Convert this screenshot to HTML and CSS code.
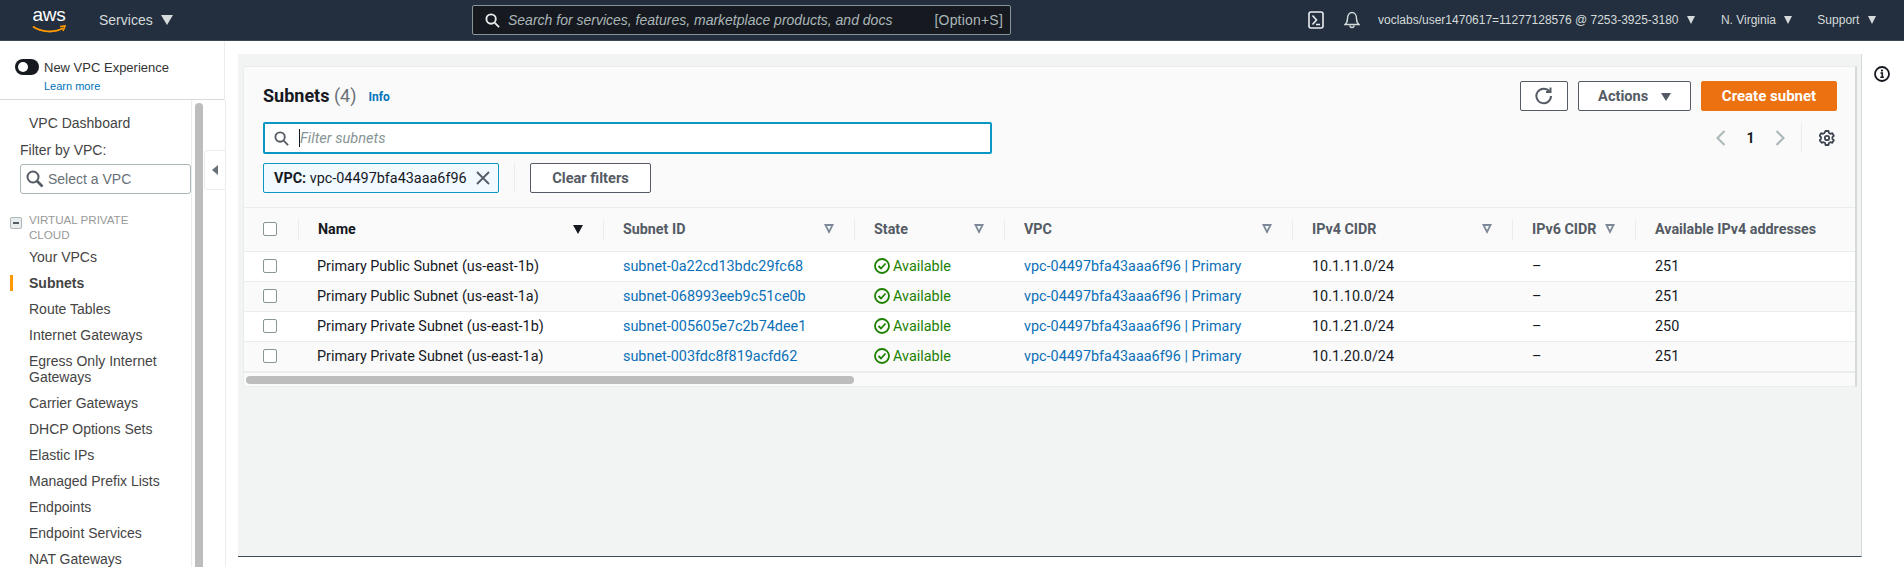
FILE: index.html
```html
<!DOCTYPE html>
<html lang="en">

<head>
    <meta charset="UTF-8">
    <meta name="viewport" content="width=device-width, initial-scale=1.0">
    <title>Subnets | VPC Console</title>
    <link rel="stylesheet" href="styles.css">
</head>

<body>
    <header class="topbar">
        <a class="logo" href="#">
            <span class="logo-text">aws</span>
            <svg class="logo-smile" viewBox="0 0 34 9"><path d="M1 1.5C9 7.5 23 8 31 3" fill="none" stroke="#f90" stroke-width="2"/><path d="M28 1.5l5-.5-2 5" fill="none" stroke="#f90" stroke-width="1.6"/></svg>
        </a>
        <a class="top-link services" href="#">Services <span class="caret caret-big"></span></a>
        <div class="search">
            <svg class="search-icon" viewBox="0 0 16 16"><circle cx="6.5" cy="6.5" r="5" fill="none" stroke="#eaeded" stroke-width="2"/><path d="M10.5 10.5l4.5 4.5" stroke="#eaeded" stroke-width="2"/></svg>
            <span class="search-text">Search for services, features, marketplace products, and docs</span>
            <span class="search-key">[Option+S]</span>
        </div>
        <div class="top-right">
            <svg class="top-icon shell" viewBox="0 0 16 18"><rect x="1" y="1" width="14" height="16" rx="2" fill="none" stroke="#eaeded" stroke-width="1.6"/><path d="M4.5 4.5L8.5 9l-4 4.5M8 13.5h4" fill="none" stroke="#eaeded" stroke-width="1.6"/></svg>
            <svg class="top-icon bell" viewBox="0 0 16 18"><path d="M1 13.5c2-1.5 2.5-3 2.5-6C3.500 4 5.500 1.500 8 1.500s4.500 2.500 4.500 6c0 3 .5 4.500 2.500 6z" fill="none" stroke="#d5dbdb" stroke-width="1.400"/><path d="M6 14.500a2 2 0 0 0 4 0" fill="none" stroke="#d5dbdb" stroke-width="1.400"/></svg>
            <a class="top-link account" href="#">voclabs/user1470617=11277128576 @ 7253-3925-3180 <span class="caret"></span></a>
            <a class="top-link region" href="#">N. Virginia <span class="caret"></span></a>
            <a class="top-link support" href="#">Support <span class="caret"></span></a>
        </div>
    </header>

    <div class="page">
        <aside class="sidenav">
            <div class="experience">
                <div class="experience-row">
                    <span class="toggle"></span>
                    <span>New VPC Experience</span>
                </div>
                <a class="learn-more" href="#">Learn more</a>
            </div>
            <div class="nav-scroll">
                <nav class="nav-list">
                    <a class="nav-dashboard" href="#">VPC Dashboard</a>
                    <div class="nav-filter-label">Filter by VPC:</div>
                    <div class="vpc-select">
                        <svg viewBox="0 0 18 18"><circle cx="7" cy="7" r="5.500" fill="none" stroke="#545b64" stroke-width="2"/><path d="M11 11l5.500 5.500" stroke="#545b64" stroke-width="2.600"/></svg>
                        <span>Select a VPC</span>
                    </div>
                    <div class="nav-section">
                        <span class="collapse-box"></span>
                        <span>VIRTUAL PRIVATE CLOUD</span>
                    </div>
                    <a class="nav-item" href="#">Your VPCs</a>
                    <a class="nav-item active" href="#">Subnets</a>
                    <a class="nav-item" href="#">Route Tables</a>
                    <a class="nav-item" href="#">Internet Gateways</a>
                    <a class="nav-item" href="#">Egress Only Internet Gateways</a>
                    <a class="nav-item" href="#">Carrier Gateways</a>
                    <a class="nav-item" href="#">DHCP Options Sets</a>
                    <a class="nav-item" href="#">Elastic IPs</a>
                    <a class="nav-item" href="#">Managed Prefix Lists</a>
                    <a class="nav-item" href="#">Endpoints</a>
                    <a class="nav-item" href="#">Endpoint Services</a>
                    <a class="nav-item" href="#">NAT Gateways</a>
                </nav>
                <div class="nav-thumb"></div>
            </div>
            <div class="collapse-handle"><span class="arrow-left"></span></div>
        </aside>

        <div class="main-wrap">
            <main class="main">
                <section class="card">
                    <div class="card-head">
                        <div class="head-left">
                            <div class="title-row">
                                <h1>Subnets <span class="count">(4)</span></h1>
                                <a class="info" href="#">Info</a>
                            </div>
                            <div class="filter-input">
                                <svg viewBox="0 0 16 16"><circle cx="6.500" cy="6.500" r="5" fill="none" stroke="#545b64" stroke-width="2"/><path d="M10.500 10.500l4.500 4.500" stroke="#545b64" stroke-width="2"/></svg>
                                <span class="cursor"></span>
                                <span class="filter-placeholder">Filter subnets</span>
                            </div>
                            <div class="token-row">
                                <div class="token">
                                    <span><b>VPC:</b> vpc-04497bfa43aaa6f96</span>
                                    <svg viewBox="0 0 14 14"><path d="M1 1l12 12M13 1L1 13" stroke="#545b64" stroke-width="1.800"/></svg>
                                </div>
                                <span class="token-sep"></span>
                                <button class="btn clear-btn">Clear filters</button>
                            </div>
                        </div>
                        <div class="head-right">
                            <div class="actions">
                                <button class="btn refresh-btn">
                                    <svg viewBox="0 0 18 18"><path d="M14.500 4.500A7.300 7.300 0 1 0 16 9" fill="none" stroke="#545b64" stroke-width="2"/><path d="M11 5h4.500V.5" fill="none" stroke="#545b64" stroke-width="2"/></svg>
                                </button>
                                <button class="btn actions-btn">Actions <span class="caret caret-btn"></span></button>
                                <button class="btn primary-btn">Create subnet</button>
                            </div>
                            <div class="pager">
                                <svg class="pager-arrow" viewBox="0 0 10 16"><path d="M8.500 1L1.500 8l7 7" fill="none" stroke="#aab7b8" stroke-width="2"/></svg>
                                <span class="pager-num">1</span>
                                <svg class="pager-arrow" viewBox="0 0 10 16"><path d="M1.500 1l7 7-7 7" fill="none" stroke="#aab7b8" stroke-width="2"/></svg>
                                <span class="pager-sep"></span>
                                <svg class="gear" viewBox="0 0 16 16"><path d="M6.500 1h3l.4 1.900 1.500.9 1.900-.6 1.500 2.600-1.400 1.300v1.800l1.400 1.300-1.500 2.600-1.900-.6-1.500.9-.4 1.900h-3l-.4-1.900-1.500-.9-1.900.6L.6 10.200 2 8.900V7.100L.6 5.800l1.500-2.600 1.900.6 1.500-.9z" fill="none" stroke="#3f4650" stroke-width="1.800" stroke-linejoin="round"/><circle cx="8" cy="8" r="2.200" fill="none" stroke="#3f4650" stroke-width="1.800"/></svg>
                            </div>
                        </div>
                    </div>

                    <div class="table-wrap">
                        <table class="subnets">
                            <colgroup>
                                <col class="col-check">
                                <col class="col-name">
                                <col class="col-id">
                                <col class="col-state">
                                <col class="col-vpc">
                                <col class="col-ipv4">
                                <col class="col-ipv6">
                                <col class="col-avail">
                            </colgroup>
                            <thead>
                                <tr>
                                    <th><span class="check"></span></th>
                                    <th class="sorted"><div class="th-in">Name<span class="sort-down"></span></div></th>
                                    <th><div class="th-in">Subnet ID<span class="sort"></span></div></th>
                                    <th><div class="th-in">State<span class="sort"></span></div></th>
                                    <th><div class="th-in">VPC<span class="sort"></span></div></th>
                                    <th><div class="th-in">IPv4 CIDR<span class="sort"></span></div></th>
                                    <th><div class="th-in short">IPv6 CIDR<span class="sort"></span></div></th>
                                    <th><div class="th-in">Available IPv4 addresses<span class="sort"></span></div></th>
                                </tr>
                            </thead>
                            <tbody>
                                <tr>
                                    <td><span class="check"></span></td>
                                    <td>Primary Public Subnet (us-east-1b)</td>
                                    <td><a href="#">subnet-0a22cd13bdc29fc68</a></td>
                                    <td><span class="status"><svg viewBox="0 0 16 16"><circle cx="8" cy="8" r="7" fill="none" stroke="#1d8102" stroke-width="1.800"/><path d="M4.500 8l2.500 2.500 4.500-5" fill="none" stroke="#1d8102" stroke-width="1.800"/></svg>Available</span></td>
                                    <td><a href="#">vpc-04497bfa43aaa6f96 | Primary</a></td>
                                    <td>10.1.11.0/24</td>
                                    <td>–</td>
                                    <td>251</td>
                                </tr>
                                <tr>
                                    <td><span class="check"></span></td>
                                    <td>Primary Public Subnet (us-east-1a)</td>
                                    <td><a href="#">subnet-068993eeb9c51ce0b</a></td>
                                    <td><span class="status"><svg viewBox="0 0 16 16"><circle cx="8" cy="8" r="7" fill="none" stroke="#1d8102" stroke-width="1.800"/><path d="M4.500 8l2.500 2.500 4.500-5" fill="none" stroke="#1d8102" stroke-width="1.800"/></svg>Available</span></td>
                                    <td><a href="#">vpc-04497bfa43aaa6f96 | Primary</a></td>
                                    <td>10.1.10.0/24</td>
                                    <td>–</td>
                                    <td>251</td>
                                </tr>
                                <tr>
                                    <td><span class="check"></span></td>
                                    <td>Primary Private Subnet (us-east-1b)</td>
                                    <td><a href="#">subnet-005605e7c2b74dee1</a></td>
                                    <td><span class="status"><svg viewBox="0 0 16 16"><circle cx="8" cy="8" r="7" fill="none" stroke="#1d8102" stroke-width="1.800"/><path d="M4.500 8l2.500 2.500 4.500-5" fill="none" stroke="#1d8102" stroke-width="1.800"/></svg>Available</span></td>
                                    <td><a href="#">vpc-04497bfa43aaa6f96 | Primary</a></td>
                                    <td>10.1.21.0/24</td>
                                    <td>–</td>
                                    <td>250</td>
                                </tr>
                                <tr>
                                    <td><span class="check"></span></td>
                                    <td>Primary Private Subnet (us-east-1a)</td>
                                    <td><a href="#">subnet-003fdc8f819acfd62</a></td>
                                    <td><span class="status"><svg viewBox="0 0 16 16"><circle cx="8" cy="8" r="7" fill="none" stroke="#1d8102" stroke-width="1.800"/><path d="M4.500 8l2.500 2.500 4.500-5" fill="none" stroke="#1d8102" stroke-width="1.800"/></svg>Available</span></td>
                                    <td><a href="#">vpc-04497bfa43aaa6f96 | Primary</a></td>
                                    <td>10.1.20.0/24</td>
                                    <td>–</td>
                                    <td>251</td>
                                </tr>
                            </tbody>
                        </table>
                    </div>
                    <div class="h-scroll"><div class="h-thumb"></div></div>
                </section>
            </main>
        </div>

        <aside class="help-rail">
            <svg viewBox="0 0 16 16"><circle cx="8" cy="8" r="7" fill="none" stroke="#16191f" stroke-width="1.800"/><path d="M6.500 7H8.300v4M6.300 11.200h3.600" fill="none" stroke="#16191f" stroke-width="1.600"/><circle cx="8" cy="4.600" r="1.100" fill="#16191f"/></svg>
        </aside>
    </div>
</body>

</html>
```

FILE: styles.css
```css
/* Page frame */
* {
    box-sizing: border-box;
}

html,
body {
    margin: 0;
    height: 567px;
    overflow: hidden;
    background-color: #fff;
}

body {
    font-family: "Liberation Sans", Arial, sans-serif;
    color: #16191f;
}

a {
    text-decoration: none;
    color: inherit;
}

svg {
    display: block;
    flex: none;
}

/* Top navigation */
.topbar {
    display: flex;
    align-items: center;
    height: 41px;
    background-color: #232f3e;
    border-bottom: 1px solid #3b4654;
    color: #d5dbdb;
}

.logo {
    position: relative;
    width: 34px;
    height: 30px;
    margin-left: 32px;
    margin-right: 33px;
    flex: none;
}

.logo-text {
    display: block;
    font-size: 19px;
    line-height: 20px;
    color: #fff;
    text-align: center;
    letter-spacing: -0.3px;
}

.logo-smile {
    position: absolute;
    left: 0;
    top: 20px;
    width: 34px;
    height: 9px;
}

.top-link {
    white-space: nowrap;
    font-size: 12px;
    color: #d5dbdb;
}

.services {
    font-size: 14px;
    width: 373px;
    flex: none;
}

.caret {
    display: inline-block;
    width: 0;
    height: 0;
    margin-left: 5px;
    border-left: 4.500px solid transparent;
    border-right: 4.500px solid transparent;
    border-top: 8px solid #d5dbdb;
}

.caret-big {
    border-left-width: 6px;
    border-right-width: 6px;
    border-top-width: 10px;
    margin-left: 4px;
    vertical-align: 0;
}

.search {
    display: flex;
    align-items: center;
    width: 539px;
    height: 30px;
    padding: 0 7px 0 12px;
    flex: none;
    background-color: #16191f;
    border: 1px solid #879596;
    border-radius: 2px;
}

.search-icon {
    width: 15px;
    height: 15px;
    margin-right: 8px;
}

.search-text {
    font-size: 14px;
    font-style: italic;
    color: #aab7b8;
    white-space: nowrap;
}

.search-key {
    margin-left: auto;
    font-size: 14px;
    letter-spacing: 0.2px;
    color: #aab7b8;
}

.top-right {
    display: flex;
    align-items: center;
    margin-left: 297px;
}

.top-icon {
    width: 16px;
    height: 18px;
}

.bell {
    margin-left: 20px;
    margin-right: 18px;
}

.region {
    margin-left: 26px;
}

.support {
    margin-left: 25px;
}

/* Left navigation */
.page {
    display: flex;
    height: 526px;
}

.sidenav {
    position: relative;
    width: 238px;
    flex: none;
    font-size: 14px;
    color: #444;
}

.experience {
    width: 225px;
    height: 59px;
    padding: 18px 0 0 15px;
    border-right: 1px solid #eaeded;
    border-bottom: 1px solid #d5dbdb;
}

.experience-row {
    display: flex;
    align-items: center;
    gap: 5px;
    height: 16px;
    font-size: 13px;
    color: #333;
}

.toggle {
    position: relative;
    width: 24px;
    height: 16px;
    border-radius: 8px;
    background-color: #16191f;
    flex: none;
}

.toggle::after {
    content: "";
    position: absolute;
    left: 3px;
    top: 3px;
    width: 10px;
    height: 10px;
    border-radius: 50%;
    background-color: #fff;
}

.learn-more {
    display: block;
    margin: 5px 0 0 29px;
    font-size: 11px;
    color: #0073bb;
}

.nav-scroll {
    display: flex;
    width: 226px;
    height: 467px;
    overflow: hidden;
    border-right: 1px solid #eaeded;
}

.nav-list {
    width: 192px;
    height: 500px;
    flex: none;
    padding-top: 14px;
    border-right: 1px solid #eaeded;
}

.nav-dashboard {
    display: block;
    padding-left: 29px;
    line-height: 18px;
}

.nav-filter-label {
    padding-left: 20px;
    margin-top: 9px;
    line-height: 18px;
}

.vpc-select {
    display: flex;
    align-items: center;
    gap: 4px;
    width: 171px;
    height: 30px;
    margin: 5px 0 0 20px;
    padding-left: 5px;
    background-color: #fff;
    border: 1px solid #aab7b8;
    border-radius: 3px;
    color: #687078;
}

.vpc-select svg {
    width: 18px;
    height: 18px;
}

.nav-section {
    position: relative;
    margin-top: 18px;
    padding-left: 29px;
    padding-right: 30px;
    font-size: 11.600px;
    line-height: 15px;
    color: #999;
}

.collapse-box {
    position: absolute;
    left: 10px;
    top: 5px;
    width: 12px;
    height: 12px;
    background-color: #eaeded;
    border: 1px solid #aab7b8;
    border-radius: 2px;
}

.collapse-box::after {
    content: "";
    position: absolute;
    left: 2px;
    top: 4px;
    width: 6px;
    height: 2px;
    background-color: #545b64;
}

.nav-item {
    position: relative;
    display: block;
    padding: 4px 30px 5px 29px;
    line-height: 16px;
    margin-bottom: 1px;
}

.nav-section + .nav-item {
    margin-top: 3px;
}

.nav-item.active {
    font-weight: bold;
}

.nav-item.active::before {
    content: "";
    position: absolute;
    left: 10px;
    top: 4px;
    width: 3px;
    height: 16px;
    background-color: #ff9900;
}

.nav-thumb {
    width: 8px;
    height: 470px;
    margin: 3px 0 0 3px;
    flex: none;
    background-color: #bdbdbd;
    border-radius: 4px 4px 0 0;
}

.collapse-handle {
    position: absolute;
    left: 204px;
    top: 109px;
    display: flex;
    align-items: center;
    justify-content: center;
    width: 21px;
    height: 40px;
    background-color: #fff;
    border: 1px solid #eaeded;
    border-right: none;
    border-radius: 4px 0 0 4px;
}

.arrow-left {
    width: 0;
    height: 0;
    border-top: 5px solid transparent;
    border-bottom: 5px solid transparent;
    border-right: 6px solid #687078;
}

/* Main column */
.main-wrap {
    width: 1624px;
    height: 516px;
    padding-top: 13px;
    flex: none;
}

.main {
    height: 503px;
    padding: 12px 5px 0;
    background-color: #f2f3f3;
    border-right: 1px solid #d5dbdb;
    border-bottom: 1px solid #414d5c;
}

.card {
    width: 1614px;
    background-color: #fafafa;
    border: 1px solid #eaeded;
    border-right: 2px solid #d5dbdb;
}

.card-head {
    display: flex;
    justify-content: space-between;
    height: 141px;
    padding: 14px 18px 0 19px;
    border-bottom: 1px solid #eaeded;
}

.title-row {
    display: flex;
    align-items: center;
    gap: 12px;
    height: 28px;
}

h1 {
    margin: 0;
    font-family: Roboto, sans-serif;
    font-size: 18px;
    font-weight: 700;
}

.count {
    font-weight: 400;
    color: #687078;
}

.info {
    font-family: Roboto, sans-serif;
    font-size: 12px;
    font-weight: 700;
    color: #0073bb;
    margin-top: 3px;
}

.filter-input {
    display: flex;
    align-items: center;
    width: 729px;
    height: 32px;
    margin-top: 13px;
    padding-left: 9px;
    background-color: #fff;
    border: 2px solid #0a97c4;
    border-radius: 2px;
}

.filter-input svg {
    width: 15px;
    height: 15px;
    margin-right: 10px;
}

.cursor {
    width: 1px;
    height: 18px;
    background-color: #16191f;
}

.filter-placeholder {
    font-family: Roboto, sans-serif;
    font-size: 14.600px;
    font-style: italic;
    color: #879596;
}

.token-row {
    display: flex;
    align-items: center;
    margin-top: 9px;
}

.token {
    display: flex;
    align-items: center;
    justify-content: space-between;
    width: 236px;
    height: 30px;
    padding: 0 8px 0 10px;
    font-family: Roboto, sans-serif;
    font-size: 14.400px;
    background-color: #f1faff;
    border: 1px solid #0a97c4;
    border-radius: 2px;
}

.token svg {
    width: 14px;
    height: 14px;
}

.token-sep {
    width: 1px;
    height: 30px;
    margin: 0 15px;
    background-color: #eaeded;
}

.btn {
    font-family: Roboto, sans-serif;
    font-size: 14.600px;
    font-weight: 700;
    color: #545b64;
    height: 30px;
    padding: 0;
    background-color: #fff;
    border: 1px solid #545b64;
    border-radius: 2px;
}

.clear-btn {
    width: 121px;
}

.head-right {
    display: flex;
    flex-direction: column;
    align-items: flex-end;
}

.actions {
    display: flex;
    gap: 10px;
}

.refresh-btn {
    display: flex;
    align-items: center;
    justify-content: center;
    width: 48px;
}

.refresh-btn svg {
    width: 18px;
    height: 18px;
}

.actions-btn {
    width: 113px;
}

.caret-btn {
    margin-left: 9px;
    border-top-color: #545b64;
    border-left-width: 5px;
    border-right-width: 5px;
}

.primary-btn {
    width: 136px;
    font-size: 15px;
    background-color: #ec7211;
    border-color: #ec7211;
    color: #fff;
}

.pager {
    display: flex;
    align-items: center;
    height: 30px;
    margin-top: 12px;
    margin-right: 2px;
}

.pager-arrow {
    width: 10px;
    height: 16px;
}

.pager-num {
    width: 49px;
    text-align: center;
    font-family: Roboto, sans-serif;
    font-size: 14px;
    font-weight: 700;
}

.pager-sep {
    width: 1px;
    height: 30px;
    margin: 0 17px 0 16px;
    background-color: #eaeded;
}

.gear {
    width: 16px;
    height: 16px;
}

/* Table */
.table-wrap {
    overflow: hidden;
}

.subnets {
    width: 1720px;
    table-layout: fixed;
    border-collapse: collapse;
    font-family: Roboto, sans-serif;
    font-size: 14.400px;
}

.col-check { width: 54px; }
.col-name { width: 305px; }
.col-id { width: 251px; }
.col-state { width: 150px; }
.col-vpc { width: 288px; }
.col-ipv4 { width: 220px; }
.col-ipv6 { width: 123px; }
.col-avail { width: 329px; }

.subnets th {
    height: 43px;
    padding: 0;
    text-align: left;
    font-size: 14.300px;
    font-weight: 700;
    color: #545b64;
    border-bottom: 1px solid #eaeded;
}

.subnets th.sorted {
    color: #16191f;
}

.th-in {
    display: flex;
    align-items: center;
    justify-content: space-between;
    height: 21px;
    padding: 0 20px 0 19px;
    white-space: nowrap;
    border-left: 1px solid #eaeded;
}

.th-in.short {
    justify-content: flex-start;
    gap: 9px;
}

.sort,
.sort-down {
    display: block;
    width: 0;
    height: 0;
    flex: none;
}

.sort-down {
    border-left: 5px solid transparent;
    border-right: 5px solid transparent;
    border-top: 9px solid #16191f;
}

.sort {
    position: relative;
    border-left: 5.500px solid transparent;
    border-right: 5.500px solid transparent;
    border-top: 10px solid #7d8998;
}

.sort::after {
    content: "";
    position: absolute;
    left: -2.500px;
    top: -8px;
    width: 0;
    height: 0;
    border-left: 2.500px solid transparent;
    border-right: 2.500px solid transparent;
    border-top: 4.500px solid #fafafa;
}

.subnets td {
    height: 30px;
    padding: 0;
    background-color: #fff;
    border-bottom: 1px solid #eaeded;
    white-space: nowrap;
}

.subnets tbody tr:nth-child(even) td {
    background-color: #fafafa;
}

.subnets td:nth-child(2) {
    padding-left: 19px;
}

.subnets td:nth-child(n+3) {
    padding-left: 20px;
}

.subnets td a {
    color: #0b6fb8;
}

.check {
    display: block;
    width: 14px;
    height: 14px;
    margin-left: 19px;
    background-color: #fff;
    border: 1px solid #879596;
    border-radius: 2px;
}

.status {
    display: flex;
    align-items: center;
    gap: 3px;
    color: #1d8102;
}

.status svg {
    width: 16px;
    height: 16px;
}

.h-scroll {
    height: 14px;
    padding: 3px 2px;
    border-top: 1px solid #eaeded;
}

.h-thumb {
    width: 608px;
    height: 8px;
    background-color: #bdbdbd;
    border-radius: 4px;
}

/* Right rail */
.help-rail {
    flex: 1;
    padding: 25px 0 0 12px;
}

.help-rail svg {
    width: 16px;
    height: 16px;
}
```
